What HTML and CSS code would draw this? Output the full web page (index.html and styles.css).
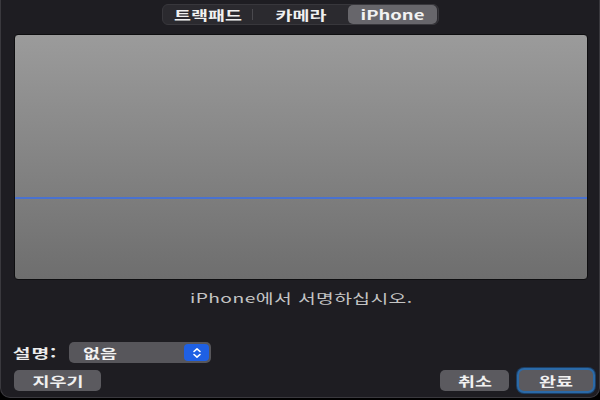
FILE: index.html
```html
<!DOCTYPE html>
<html lang="ko">
<head>
<meta charset="utf-8">
<link rel="stylesheet" href="styles.css">
</head>
<body>
<div class="window">
  <div class="seg-row">
    <div class="seg">
      <div class="seg-item"><span class="wide">트랙패드</span></div>
      <div class="seg-div"></div>
      <div class="seg-item"><span class="wide">카메라</span></div>
      <div class="seg-item seg-sel"><span class="wide">iPhone</span></div>
    </div>
  </div>
  <div class="pad">
    <div class="pad-line"></div>
  </div>
  <div class="caption"><span class="wide wider">iPhone에서 서명하십시오.</span></div>
  <div class="desc-row">
    <span class="label"><span class="wide wider">설명:</span></span>
    <div class="select">
      <span class="select-text"><span class="wide">없음</span></span>
      <span class="stepper">
        <svg width="12" height="12" viewBox="0 0 12 12"><path d="M3 4.5 L6 1.8 L9 4.5 M3 7.5 L6 10.2 L9 7.5" fill="none" stroke="#fff" stroke-width="1.6" stroke-linecap="round" stroke-linejoin="round"/></svg>
      </span>
    </div>
  </div>
  <div class="btn-row">
    <button class="btn btn-clear"><span class="wide">지우기</span></button>
    <div class="spacer"></div>
    <button class="btn btn-cancel"><span class="wide">취소</span></button>
    <button class="btn btn-done"><span class="wide">완료</span></button>
  </div>
</div>
</body>
</html>
```

FILE: styles.css
```css
html, body {
  margin: 0;
  padding: 0;
  background: #000;
  width: 600px;
  height: 400px;
  overflow: hidden;
}
body {
  font-family: "Noto Sans CJK KR", "Noto Sans", sans-serif;
  color: #ececec;
}
.wide {
  display: inline-block;
  transform: scaleX(1.42);
  white-space: nowrap;
}
.wider {
  transform: scaleX(1.48);
}
.window {
  box-sizing: border-box;
  width: 600px;
  height: 398px;
  background: #1e1d22;
  border: 1px solid #3a393e;
  border-top: none;
  border-radius: 0 0 10px 10px;
  display: flex;
  flex-direction: column;
}
.seg-row {
  display: flex;
  justify-content: center;
  padding-top: 4px;
  padding-left: 1px;
}
.seg {
  box-sizing: border-box;
  width: 277px;
  height: 21px;
  background: #2b2a2f;
  border: 1px solid #38373c;
  border-radius: 6px;
  display: flex;
  align-items: center;
  padding: 0 1px;
}
.seg-item {
  font-size: 13px;
  font-weight: 700;
  line-height: 19px;
  text-align: center;
  color: #f0f0f0;
}
.seg-item:nth-child(1) { width: 88px; }
.seg-item:nth-child(3) { width: 95px; }
.seg-div {
  width: 1px;
  height: 11px;
  background: #4a494e;
}
.seg-sel {
  width: 89px;
  height: 19px;
  background: #67666b;
  border-radius: 5px;
  color: #f2f2f2;
}
.pad {
  box-sizing: border-box;
  margin: 9px 11px 0 13px;
  height: 246px;
  border: 1px solid #0e0e10;
  border-radius: 4px;
  background: linear-gradient(#9b9b9b, #6e6e6e);
  padding-top: 162px;
}
.pad-line {
  height: 2px;
  background: #4a72cf;
}
.caption {
  margin-top: 9px;
  text-align: center;
  font-size: 13px;
  line-height: 17px;
  color: #c4c4c4;
  padding-left: 3px;
  letter-spacing: 0.3px;
}
.desc-row {
  display: flex;
  align-items: center;
  margin-top: 36px;
  padding-left: 13px;
  height: 21px;
}
.label {
  font-size: 13px;
  font-weight: 700;
  color: #ececec;
  width: 55px;
  padding-left: 6px;
  box-sizing: border-box;
  letter-spacing: 0.6px;
}
.select {
  box-sizing: border-box;
  width: 142px;
  height: 21px;
  background: #57565b;
  border-radius: 5px;
  display: flex;
  align-items: center;
  justify-content: space-between;
  padding: 0 2px 0 19px;
}
.select-text {
  font-size: 13px;
  font-weight: 700;
  color: #f2f2f2;
}
.stepper {
  width: 25px;
  height: 17px;
  background: #1f60e4;
  border-radius: 4px;
  display: flex;
  align-items: center;
  justify-content: center;
}
.btn-row {
  display: flex;
  align-items: center;
  margin-top: 7px;
  padding: 0 6px 0 13px;
}
.spacer { flex: 1; }
.btn {
  box-sizing: border-box;
  height: 21px;
  border: none;
  border-radius: 5px;
  background: #5b5a5f;
  color: #f0f0f0;
  font-family: "Noto Sans CJK KR", "Noto Sans", sans-serif;
  font-size: 13px;
  font-weight: 700;
  padding: 0;
  line-height: 21px;
}
.btn-clear { width: 87px; }
.btn-cancel { width: 69px; margin-right: 10px; }
.btn-done {
  width: 74px;
  height: 21px;
  box-shadow: 0 0 0 2px #2b6aa8, 0 0 0 3px #1c3f66;
}
```
